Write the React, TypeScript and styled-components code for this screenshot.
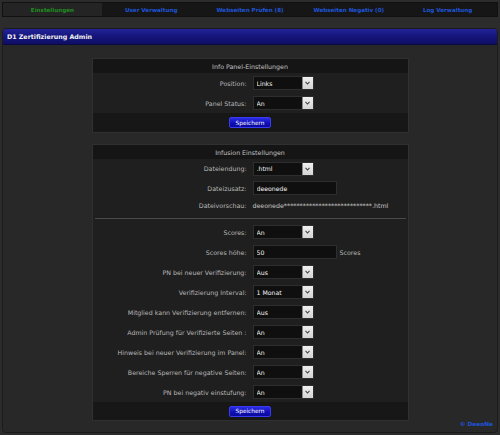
import styled, { createGlobalStyle } from "styled-components";

const GlobalStyle = createGlobalStyle`
  html, body {
    margin: 0;
    padding: 0;
    background: #2c2c2c;
  }
  body {
    font-family: "DejaVu Sans", Verdana, sans-serif;
    font-size: 6.3px;
    color: #b8b8b8;
  }
`;

const Page = styled.div`
  width: 500px;
  height: 435px;
  box-sizing: border-box;
  padding: 2px 2px 0;
  display: flex;
  flex-direction: column;
`;

const TabBar = styled.nav`
  display: grid;
  grid-template-columns: repeat(5, 1fr);
  height: 13px;
  background: #161616;
  border: 1px solid #111;
`;

const Tab = styled.a<{ $active?: boolean }>`
  display: flex;
  align-items: center;
  justify-content: center;
  font-weight: bold;
  font-size: 5.6px;
  text-decoration: none;
  color: ${(p) => (p.$active ? "#1f8f1f" : "#1e55d8")};
  background: ${(p) => (p.$active ? "#242424" : "transparent")};
`;

const Panel = styled.section`
  margin-top: 11px;
  height: 405px;
  box-sizing: border-box;
  border: 1px solid #1b1b1b;
  border-radius: 4px;
  background: #282828;
  box-shadow: 0 0 1px #383838 inset;
  display: flex;
  flex-direction: column;
`;

const PanelHeader = styled.h1`
  margin: 0;
  height: 16px;
  box-sizing: border-box;
  padding-left: 4px;
  display: flex;
  align-items: center;
  font-size: 6.3px;
  font-weight: bold;
  color: #f2f2f2;
  border-radius: 3px 3px 0 0;
  border-bottom: 1px solid #0a0a40;
  background: linear-gradient(#23239a, #15157a 50%, #0e0e66);
`;

const PanelBody = styled.div`
  flex: 1;
  display: flex;
  flex-direction: column;
  align-items: center;
  gap: 11px;
  padding-top: 13px;
  position: relative;
`;

const Table = styled.div`
  width: 317px;
  box-sizing: border-box;
  border: 1px solid #303030;
  background: #1f1f1f;
`;

const TableHead = styled.div`
  height: 14px;
  display: flex;
  align-items: center;
  justify-content: center;
  background: #151515;
  color: #c4c4c4;
`;

const Row = styled.div<{ $h?: number }>`
  height: ${(p) => p.$h ?? 20}px;
  display: grid;
  grid-template-columns: 154px 1fr;
  column-gap: 6px;
  align-items: center;
`;

const Label = styled.label`
  text-align: right;
  white-space: nowrap;
`;

const Field = styled.div`
  display: flex;
  align-items: center;
  gap: 3px;
`;

const SelectBox = styled.div`
  display: flex;
  width: 61px;
  height: 14px;
  box-sizing: border-box;
  border: 1px solid #2e2e2e;
  background: #0f0f0f;
`;

const Select = styled.select`
  flex: 1;
  min-width: 0;
  appearance: none;
  border: 0;
  outline: 0;
  background: transparent;
  color: #f4f4f4;
  font-family: inherit;
  font-size: 6.2px;
  padding: 0 0 0 3px;
`;

const Arrow = styled.span`
  width: 10px;
  display: flex;
  align-items: center;
  justify-content: center;
  background: linear-gradient(#f0f0f0, #d4d4d4);
  border-left: 1px solid #888;
`;

const TextInput = styled.input`
  width: 84px;
  height: 14px;
  box-sizing: border-box;
  border: 1px solid #2e2e2e;
  background: #0f0f0f;
  color: #f4f4f4;
  font-family: inherit;
  font-size: 6.2px;
  padding: 0 0 0 3px;
  outline: 0;
`;

const Preview = styled.span`
  white-space: nowrap;
  color: #c8c8c8;
`;

const Divider = styled.hr`
  margin: 6px 2px 3px;
  height: 1px;
  border: 0;
  background: #4a4a4a;
`;

const TableFoot = styled.div<{ $h: number }>`
  height: ${(p) => p.$h}px;
  display: flex;
  align-items: center;
  justify-content: center;
  background: #171717;
`;

const Button = styled.button`
  width: 42px;
  height: 11px;
  padding: 0;
  border: 1px solid #3a3af0;
  border-radius: 2px;
  background: linear-gradient(#2c2ce6, #1010b8 55%, #0a0a9a);
  color: #fff;
  font-family: inherit;
  font-size: 5.8px;
`;

const Copyright = styled.a`
  position: absolute;
  right: 4px;
  bottom: 5px;
  color: #1e55d8;
  font-weight: bold;
  font-size: 5.8px;
  text-decoration: none;
`;

function Chevron() {
  return (
    <svg width="5" height="4" viewBox="0 0 5 4">
      <path d="M0.5 0.8 L2.5 3 L4.5 0.8" fill="none" stroke="#444" strokeWidth="1.1" />
    </svg>
  );
}

function DropDown({ value }: { value: string }) {
  return (
    <SelectBox>
      <Select defaultValue={value}>
        <option>{value}</option>
      </Select>
      <Arrow>
        <Chevron />
      </Arrow>
    </SelectBox>
  );
}

const tabs = [
  "Einstellungen",
  "User Verwaltung",
  "Webseiten Prüfen (8)",
  "Webseiten Negativ (0)",
  "Log Verwaltung",
];

const selectRows: [string, string][] = [
  ["PN bei neuer Verifizierung:", "Aus"],
  ["Verifizierung Interval:", "1 Monat"],
  ["Mitglied kann Verifizierung entfernen:", "Aus"],
  ["Admin Prüfung für Verifizierte Seiten :", "An"],
  ["Hinweis bei neuer Verifizierung im Panel:", "An"],
  ["Bereiche Sperren für negative Seiten:", "An"],
  ["PN bei negativ einstufung:", "An"],
];

export default function App() {
  return (
    <>
      <GlobalStyle />
      <Page>
        <TabBar>
          {tabs.map((t, i) => (
            <Tab key={t} href="#" $active={i === 0}>
              {t}
            </Tab>
          ))}
        </TabBar>
        <Panel>
          <PanelHeader>D1 Zertifizierung Admin</PanelHeader>
          <PanelBody>
            <Table>
              <TableHead>Info Panel-Einstellungen</TableHead>
              <Row>
                <Label>Position:</Label>
                <Field>
                  <DropDown value="Links" />
                </Field>
              </Row>
              <Row>
                <Label>Panel Status:</Label>
                <Field>
                  <DropDown value="An" />
                </Field>
              </Row>
              <TableFoot $h={19}>
                <Button>Speichern</Button>
              </TableFoot>
            </Table>
            <Table>
              <TableHead>Infusion Einstellungen</TableHead>
              <Row $h={19}>
                <Label>Dateiendung:</Label>
                <Field>
                  <DropDown value=".html" />
                </Field>
              </Row>
              <Row>
                <Label>Dateizusatz:</Label>
                <Field>
                  <TextInput defaultValue="deeonede" />
                </Field>
              </Row>
              <Row $h={14}>
                <Label>Dateivorschau:</Label>
                <Preview>deeonede{"*".repeat(28)}.html</Preview>
              </Row>
              <Divider />
              <Row>
                <Label>Scores:</Label>
                <Field>
                  <DropDown value="An" />
                </Field>
              </Row>
              <Row>
                <Label>Scores höhe:</Label>
                <Field>
                  <TextInput defaultValue="50" />
                  <span>Scores</span>
                </Field>
              </Row>
              {selectRows.map(([l, v]) => (
                <Row key={l}>
                  <Label>{l}</Label>
                  <Field>
                    <DropDown value={v} />
                  </Field>
                </Row>
              ))}
              <TableFoot $h={18}>
                <Button>Speichern</Button>
              </TableFoot>
            </Table>
            <Copyright href="#">© DeeoNe</Copyright>
          </PanelBody>
        </Panel>
      </Page>
    </>
  );
}
